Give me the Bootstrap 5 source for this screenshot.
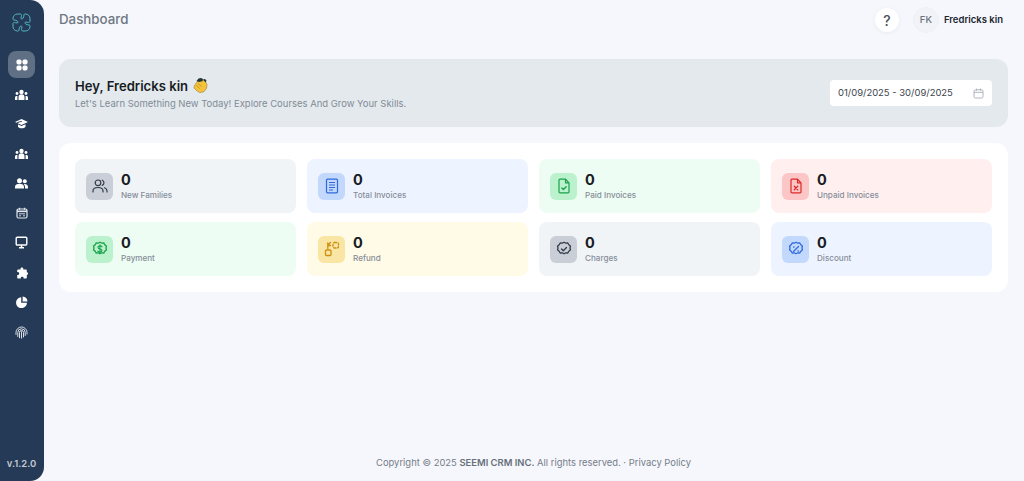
<!DOCTYPE html>
<html lang="en">
<head>
<meta charset="utf-8">
<title>Dashboard</title>
<link rel="stylesheet" href="https://cdn.jsdelivr.net/npm/bootstrap@5.3.0/dist/css/bootstrap.min.css">
<style>
html,body{height:481px;overflow:hidden}
body{background:#f5f7fc;font-family:Inter,"Liberation Sans",sans-serif;color:#1b2230}
.shell{height:481px}
.side-rail{width:44px;flex:none;background:#253a56;border-radius:0 14px 14px 0;padding:10px 1px 10px 0}
.rail-logo{height:24px;margin-bottom:17px}
.rail-item{width:27px;height:27px;border-radius:8px;margin-bottom:2.7px;color:#fff}
.rail-item.on{background:#5f6f84;margin-bottom:3px}
.rail-ver{font-size:9.5px;font-weight:600;color:#c3cad5}
.main-col{min-width:0;padding:0 16px 0 15px}
.top-bar{height:59px;padding:0 5px 19px 0}
.page-name{font-size:13.300px;font-weight:500;color:#6f7681;margin:0}
.help-btn{width:24px;height:24px;background:#fff;border-radius:50%;font-size:14px;font-weight:500;color:#4a5058;box-shadow:0 1px 4px rgba(30,40,70,.06)}
.avatar-dot{width:26px;height:26px;border-radius:50%;background:#f1f3f7;border:1px solid #eef0f5;font-size:9.5px;font-weight:500;color:#6b7280;margin-left:14px;margin-right:5px}
.user-name{font-size:9.500px;font-weight:600;color:#20262f}
.hero-band{height:68px;background:#e3e9ed;border-radius:12px;padding:0 16px}
.hero-title{font-size:13.100px;font-weight:600;color:#171c24;margin:0 0 3px;line-height:18px}
.hero-sub{font-size:9.470px;color:#828b96;margin:0;line-height:12px}
.date-box{width:162px;height:26px;background:#fff;border-radius:4px;padding:0 8px;font-size:9.450px;color:#3d444d}
.panel-box{background:#fff;border-radius:12px;margin-top:16px;padding:16px;height:149px}
.stat-grid{--bs-gutter-x:11px;--bs-gutter-y:9px}
.stat-tile{height:54px;border-radius:8px;padding:0 11px;gap:8px}
.tile-gray{background:#f1f4f7}.tile-blue{background:#eef4ff}.tile-green{background:#eefdf3}.tile-red{background:#fff0ef}.tile-yellow{background:#fffbe6}
.tile-icon{width:27px;height:27px;border-radius:6px;flex:none}
.ic-gray{background:#c9ced7;color:#333b48}.ic-blue{background:#c3d8fd;color:#2f69dc}.ic-green{background:#bbf1cd;color:#17a24a}.ic-red{background:#fcc6c6;color:#dc2828}.ic-yellow{background:#f9e5a4;color:#d0900f}
.stat-num{font-size:14.500px;font-weight:700;line-height:16px;color:#171c24;padding-top:1px}
.stat-lbl{font-size:8.100px;font-weight:500;line-height:11px;color:#868d99;margin-top:2px}
.foot-line{font-size:9.420px;color:#767d88;padding-bottom:11px}
.foot-line b{font-weight:600;color:#686f7a}
</style>
</head>
<body>
<div class="shell d-flex">
  <aside class="side-rail d-flex flex-column align-items-center">
    <div class="rail-logo d-flex align-items-center justify-content-center">
      <svg width="19" height="19" viewBox="0 0 19 19" fill="none" stroke="#53b9c2" stroke-width="1"><path d="M5.500 1h2.700c.9 0 1.300.8 1.300 1.500S9 4 9 5 10 6.300 10.800 5.500 12 3 12 2s.5-1 1.500-1C16 1 18 3 18 5.500v2.700c0 .9-.8 1.300-1.500 1.300S15 9 14 9s-1.300 1-.5 1.800 2.500 1.200 3.500 1.200 1 .5 1 1.500c0 2.500-2 4.500-4.500 4.500h-2.700c-.9 0-1.300-.8-1.300-1.500s.5-1.500.5-2.500-1-1.300-1.800-.5S7 16 7 17s-.5 1-1.500 1C3 18 1 16 1 13.500v-2.700c0-.9.800-1.300 1.500-1.300S4 10 5 10s1.300-1 .5-1.800S3 7 2 7 1 6.500 1 5.500C1 3 3 1 5.500 1z"/></svg>
    </div>
    <div class="rail-item on d-flex align-items-center justify-content-center">
      <svg width="12" height="12" viewBox="0 0 12 12" fill="currentColor"><rect x=".5" y=".5" width="5" height="5" rx="1.700"/><rect x="6.500" y=".5" width="5" height="5" rx="1.700"/><rect x=".5" y="6.500" width="5" height="5" rx="1.700"/><rect x="6.500" y="6.500" width="5" height="5" rx="1.700"/></svg>
    </div>
    <div class="rail-item d-flex align-items-center justify-content-center">
      <svg width="13" height="12" viewBox="0 0 13 12" fill="currentColor"><circle cx="6.500" cy="3" r="2.200"/><circle cx="2" cy="4.500" r="1.400"/><circle cx="11" cy="4.500" r="1.400"/><path d="M3.500 11V8.300a3 3 0 0 1 6 0V11zM0 11V8.500C0 7.300 1 6.800 2.500 7 2.300 8 2.400 9.500 2.400 11zM13 11V8.500C13 7.300 12 6.800 10.500 7c.2 1 .1 2.500.1 4z"/></svg>
    </div>
    <div class="rail-item d-flex align-items-center justify-content-center">
      <svg width="13" height="12" viewBox="0 0 13 12" fill="currentColor"><path d="M6.500 1 13 4 6.500 7 2.500 5.200c1.500-.9 2.800-1.200 4.300-1.300v-.8C5 3.200 3 3.700 1.600 4.800L0 4zM3 6.500l3.500 1.600L10.500 6.300v2.500c-1.500 2-6 2-7.500 0z"/></svg>
    </div>
    <div class="rail-item d-flex align-items-center justify-content-center">
      <svg width="13" height="12" viewBox="0 0 13 12" fill="currentColor"><circle cx="6.500" cy="3" r="2.200"/><circle cx="2" cy="4.500" r="1.400"/><circle cx="11" cy="4.500" r="1.400"/><path d="M3.500 11V8.300a3 3 0 0 1 6 0V11zM0 11V8.500C0 7.300 1 6.800 2.500 7 2.300 8 2.400 9.500 2.400 11zM13 11V8.500C13 7.300 12 6.800 10.500 7c.2 1 .1 2.500.1 4z"/></svg>
    </div>
    <div class="rail-item d-flex align-items-center justify-content-center">
      <svg width="13" height="11" viewBox="0 0 13 11" fill="currentColor"><circle cx="4.500" cy="2.800" r="2.500"/><circle cx="9.800" cy="3.200" r="2"/><path d="M0 10.500V9c0-2.200 2-3.300 4.500-3.300S9 6.800 9 9v1.500zM10 10.500V9c0-1.300-.6-2.300-1.500-3 2.500-.4 4.500.7 4.500 2.800v1.700z"/></svg>
    </div>
    <div class="rail-item d-flex align-items-center justify-content-center">
      <svg width="12" height="12" viewBox="0 0 12 12" fill="none" stroke="#e3e7ec"><rect x="1" y="2" width="10" height="9" rx="1.500" stroke-width="1.200"/><path d="M1 4.300h10" stroke-width="1.600"/><path d="M3.500 .8v2M8.500 .8v2" stroke-width="1.200"/><path d="M3 8.800h2M3 6.800h6M7 8.800h2" stroke-width=".9"/></svg>
    </div>
    <div class="rail-item d-flex align-items-center justify-content-center">
      <svg width="13" height="13" viewBox="0 0 13 13" fill="none" stroke="currentColor"><rect x="1.200" y="1.200" width="10.600" height="7.800" rx="1" stroke-width="1.400"/><path d="M4 11.800h5M6.500 9v2.500" stroke-width="1.500"/></svg>
    </div>
    <div class="rail-item d-flex align-items-center justify-content-center">
      <svg width="12" height="12" viewBox="0 0 12 12" fill="currentColor"><path d="M4.600 2.600C4.200 1.400 4.900.5 5.900.5s1.700.9 1.300 2.100H10c.5 0 .8.300.8.800v2.200c1.200-.4 1.700.3 1.100 1.300-.3.900-.9.900-1.100 1v2.900c0 .5-.3.800-.8.800H7.500c.4-1.200-.3-1.900-1.300-1.900s-1.700.7-1.300 1.900H2c-.5 0-.8-.3-.8-.8V8c1.100.4 2-.4 2-1.400S2.300 4.800 1.200 5.200V3.400c0-.5.300-.8.800-.8z"/></svg>
    </div>
    <div class="rail-item d-flex align-items-center justify-content-center">
      <svg width="12" height="12" viewBox="0 0 12 12" fill="currentColor"><path d="M5.200 1.200V6.800H11A5.500 5.500 0 1 1 5.200 1.200z"/><path d="M6.600.5A5.300 5.300 0 0 1 11.500 5.400H6.600z"/></svg>
    </div>
    <div class="rail-item d-flex align-items-center justify-content-center">
      <svg width="13" height="13" viewBox="0 0 13 13" fill="none" stroke="#e1e5eb" stroke-width=".95" stroke-linecap="round"><path d="M1 8.500V6.500a5.500 5.500 0 0 1 11 0V8M2.800 10.500V6.500a3.700 3.700 0 0 1 7.400 0v3M4.500 11.800V6.500a2 2 0 0 1 4 0v4.500M6.500 5.800v6.400"/></svg>
    </div>
    <div class="rail-ver mt-auto">v.1.2.0</div>
  </aside>

  <main class="main-col flex-grow-1 d-flex flex-column">
    <header class="top-bar d-flex align-items-center justify-content-between">
      <h1 class="page-name">Dashboard</h1>
      <div class="d-flex align-items-center">
        <div class="help-btn d-flex align-items-center justify-content-center">?</div>
        <div class="avatar-dot d-flex align-items-center justify-content-center">FK</div>
        <span class="user-name">Fredricks kin</span>
      </div>
    </header>

    <section class="hero-band d-flex align-items-center justify-content-between">
      <div>
        <h2 class="hero-title d-flex align-items-center gap-1">Hey, Fredricks kin
          <svg width="17" height="17" viewBox="0 0 17 17"><path d="M2.500 8.500 6 3.500 9 2l4 1.500 2 4-.5 4-3 3.500-4 .5-3-2-2.500-2.500z" fill="#f5c33b" stroke="#8a6a1f" stroke-width=".5"/><path d="M4.500 4 6.500 1.500 9 1l2 1-.5 2.300-3.500.7z" fill="#24363c"/><path d="M11 2.500l2-.5 1.500 1.500-1 2z" fill="#24363c"/><path d="M4.500 8.500l3 3M6 6.500l3.500 3" stroke="#b0801f" stroke-width=".7" fill="none"/></svg>
        </h2>
        <p class="hero-sub">Let's Learn Something New Today! Explore Courses And Grow Your Skills.</p>
      </div>
      <div class="date-box d-flex align-items-center justify-content-between">
        <span>01/09/2025 - 30/09/2025</span>
        <svg width="11" height="11" viewBox="0 0 11 11" fill="none" stroke="#a5acb6" stroke-width=".9"><rect x="1" y="1.800" width="9" height="8.200" rx="1.500"/><path d="M1 4.300h9M3.500.6v2M7.500.6v2"/></svg>
      </div>
    </section>

    <section class="panel-box">
      <div class="row row-cols-4 stat-grid">
        <div class="col"><div class="stat-tile tile-gray d-flex align-items-center">
          <div class="tile-icon ic-gray d-flex align-items-center justify-content-center"><svg width="16" height="16" viewBox="0 0 16 16" fill="none" stroke="currentColor" stroke-width="1.200" stroke-linecap="round"><circle cx="6" cy="4.800" r="2.800"/><path d="M1 14v-1.200C1 10.800 3 9.500 6 9.500s5 1.300 5 3.300V14M10.200 2.200a2.800 2.800 0 0 1 0 5.200M12.500 9.800c1.500.6 2.500 1.700 2.500 3V14"/></svg></div>
          <div><div class="stat-num">0</div><div class="stat-lbl">New Families</div></div>
        </div></div>
        <div class="col"><div class="stat-tile tile-blue d-flex align-items-center">
          <div class="tile-icon ic-blue d-flex align-items-center justify-content-center"><svg width="16" height="16" viewBox="0 0 16 16" fill="none" stroke="currentColor" stroke-width="1.200"><rect x="2.500" y="1.200" width="11" height="13.600" rx="1"/><path d="M5 4.500h6M5 7h6M5 9.500h6M5 12h4"/></svg></div>
          <div><div class="stat-num">0</div><div class="stat-lbl">Total Invoices</div></div>
        </div></div>
        <div class="col"><div class="stat-tile tile-green d-flex align-items-center">
          <div class="tile-icon ic-green d-flex align-items-center justify-content-center"><svg width="16" height="16" viewBox="0 0 16 16" fill="none" stroke="currentColor" stroke-width="1.200" stroke-linejoin="round" stroke-linecap="round"><path d="M3 2.200C3 1.600 3.400 1.200 4 1.200h5.500L13 4.800V14c0 .5-.4.800-1 .8H4c-.6 0-1-.3-1-.8zM9.500 1.200v3.600H13"/><path d="M5.800 10l1.600 1.500 2.800-2.800" stroke-width="1.300"/></svg></div>
          <div><div class="stat-num">0</div><div class="stat-lbl">Paid Invoices</div></div>
        </div></div>
        <div class="col"><div class="stat-tile tile-red d-flex align-items-center">
          <div class="tile-icon ic-red d-flex align-items-center justify-content-center"><svg width="16" height="16" viewBox="0 0 16 16" fill="none" stroke="currentColor" stroke-width="1.200" stroke-linejoin="round" stroke-linecap="round"><path d="M3 2.200C3 1.600 3.400 1.200 4 1.200h5.500L13 4.800V14c0 .5-.4.800-1 .8H4c-.6 0-1-.3-1-.8zM9.500 1.200v3.600H13"/><path d="M6.300 8.300l3.400 3.400M9.700 8.300l-3.400 3.400" stroke-width="1.300"/></svg></div>
          <div><div class="stat-num">0</div><div class="stat-lbl">Unpaid Invoices</div></div>
        </div></div>
        <div class="col"><div class="stat-tile tile-green d-flex align-items-center">
          <div class="tile-icon ic-green d-flex align-items-center justify-content-center"><svg width="16" height="16" viewBox="0 0 16 16" fill="none" stroke="currentColor" stroke-width="1.300" stroke-linecap="round"><path d="M8 1.200l1.800 1 2-.2 1 1.800 1.600 1.200-.4 2 .4 2-1.600 1.200-1 1.800-2-.2-1.800 1-1.800-1-2 .2-1-1.800-1.600-1.200.4-2-.4-2L3.200 3.800l1-1.800 2 .2z"/><path d="M10 5.800C9.500 5 8.800 4.900 8 4.900c-1.100 0-2 .5-2 1.500 0 2.200 4 1 4 3.200 0 1-.9 1.500-2 1.500-.9 0-1.600-.2-2.100-1M8 3.800v8.400" stroke-width="1.100"/></svg></div>
          <div><div class="stat-num">0</div><div class="stat-lbl">Payment</div></div>
        </div></div>
        <div class="col"><div class="stat-tile tile-yellow d-flex align-items-center">
          <div class="tile-icon ic-yellow d-flex align-items-center justify-content-center"><svg width="16" height="16" viewBox="0 0 16 16" fill="none" stroke="currentColor" stroke-width="1.300" stroke-linecap="round" stroke-linejoin="round"><rect x="1.500" y="9" width="5.500" height="5.500" rx="1"/><rect x="9" y="1.500" width="5.500" height="5.500" rx="1.500" stroke-dasharray="2 1.500"/><path d="M6.500 1.500L3.800 4.200M3.800 1.800v2.700h2.700M3.800 4.500v3"/></svg></div>
          <div><div class="stat-num">0</div><div class="stat-lbl">Refund</div></div>
        </div></div>
        <div class="col"><div class="stat-tile tile-gray d-flex align-items-center">
          <div class="tile-icon ic-gray d-flex align-items-center justify-content-center"><svg width="16" height="16" viewBox="0 0 16 16" fill="none" stroke="currentColor" stroke-width="1.300" stroke-linecap="round" stroke-linejoin="round"><path d="M8 1.200l1.800 1 2-.2 1 1.800 1.600 1.200-.4 2 .4 2-1.600 1.200-1 1.800-2-.2-1.800 1-1.800-1-2 .2-1-1.800-1.600-1.200.4-2-.4-2L3.200 3.800l1-1.800 2 .2z"/><path d="M5.500 8l1.800 1.800 3.200-3.300"/></svg></div>
          <div><div class="stat-num">0</div><div class="stat-lbl">Charges</div></div>
        </div></div>
        <div class="col"><div class="stat-tile tile-blue d-flex align-items-center">
          <div class="tile-icon ic-blue d-flex align-items-center justify-content-center"><svg width="16" height="16" viewBox="0 0 16 16" fill="none" stroke="currentColor" stroke-width="1.300" stroke-linecap="round" stroke-linejoin="round"><path d="M8 1.200l1.800 1 2-.2 1 1.800 1.600 1.200-.4 2 .4 2-1.600 1.200-1 1.800-2-.2-1.800 1-1.800-1-2 .2-1-1.800-1.600-1.200.4-2-.4-2L3.200 3.800l1-1.800 2 .2z"/><path d="M5.500 10.500l5-5"/><path d="M5.800 6h.1M10.200 10h.1" stroke-width="1.600"/></svg></div>
          <div><div class="stat-num">0</div><div class="stat-lbl">Discount</div></div>
        </div></div>
      </div>
    </section>

    <footer class="foot-line mt-auto text-center">Copyright © 2025 <b>SEEMI CRM INC.</b> All rights reserved. · Privacy Policy</footer>
  </main>
</div>
<script src="https://cdn.jsdelivr.net/npm/bootstrap@5.3.0/dist/js/bootstrap.bundle.min.js"></script>
</body>
</html>
